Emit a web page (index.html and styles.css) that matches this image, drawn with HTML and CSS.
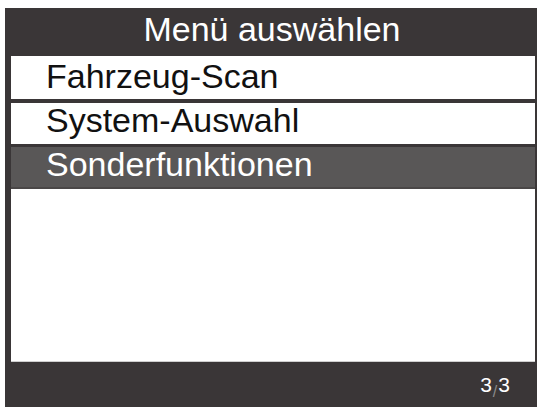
FILE: index.html
```html
<!DOCTYPE html>
<html lang="de">
<head>
<meta charset="utf-8">
<title>Menü auswählen</title>
<link rel="stylesheet" href="styles.css">
</head>
<body>
<div class="screen">
  <div class="header">Menü auswählen</div>
  <div class="menu">
    <div class="item item-1">Fahrzeug-Scan</div>
    <div class="item item-2">System-Auswahl</div>
    <div class="item item-3 selected">Sonderfunktionen</div>
    <div class="blank"></div>
  </div>
  <div class="footer"><span class="page">3<span class="slash">/</span>3</span></div>
</div>
</body>
</html>
```
FILE: styles.css
```css
html, body {
  margin: 0;
  padding: 0;
  background: #ffffff;
}
body {
  width: 540px;
  height: 407px;
  overflow: hidden;
  font-family: "Liberation Sans", Arial, sans-serif;
}
.screen {
  margin: 8px 3px 0 5px;
  height: 399px;
  background: #3a3637;
  padding: 0 2px 0 6px;
  display: flex;
  flex-direction: column;
}
.header {
  height: 48px;
  flex: none;
  color: #ffffff;
  font-size: 34px;
  line-height: 42px;
  text-align: center;
  padding-right: 2px;
}
.menu {
  flex: 1;
  display: flex;
  flex-direction: column;
}
.item {
  flex: none;
  background: #ffffff;
  color: #111111;
  font-size: 34px;
  padding-left: 35px;
  box-sizing: border-box;
}
.item-1 {
  height: 43px;
  line-height: 40px;
}
.item-2 {
  height: 41px;
  line-height: 34px;
  margin-top: 4px;
}
.item-3 {
  height: 42px;
  line-height: 34px;
  margin-top: 3px;
}
.selected {
  background: #595757;
  color: #ffffff;
  border-bottom: 2px solid #4a4747;
}
.blank {
  flex: 1;
  background: #ffffff;
  border-bottom: 1px solid #cfcfcf;
}
.footer {
  height: 45px;
  flex: none;
  display: flex;
  justify-content: flex-end;
  align-items: flex-start;
  padding-right: 25px;
  color: #ffffff;
  font-size: 21px;
}
.page {
  margin-top: 11px;
}
.slash {
  display: inline-block;
  color: #8a8a8a;
  font-size: 16px;
  margin: 0 1px;
  transform: translateY(5px);
}
```
